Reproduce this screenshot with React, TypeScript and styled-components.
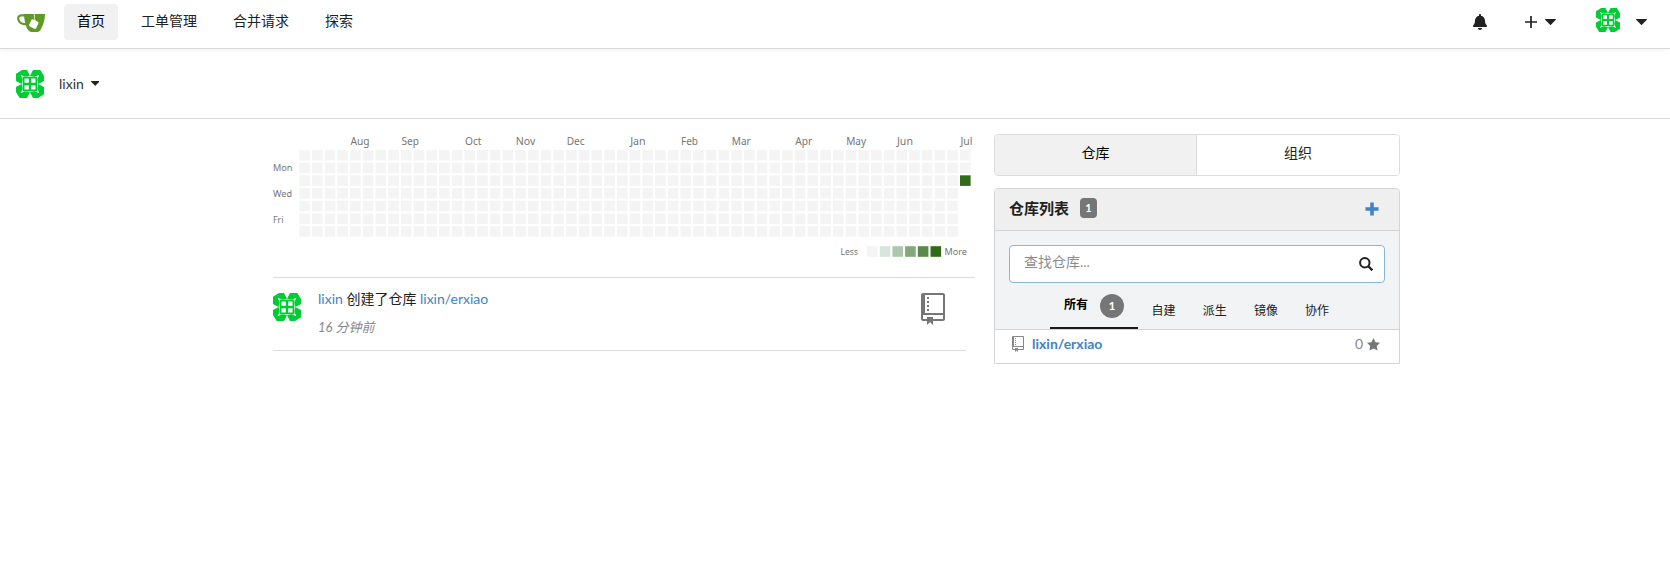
import React from "react";
import styled, { createGlobalStyle } from "styled-components";

const Global = createGlobalStyle`
  *, *::before, *::after { box-sizing: border-box; }
  body { margin: 0; background: #fff; color: #212121;
    font: 14px/20px Lato, "Noto Sans CJK SC", sans-serif; }
  svg { display: block; flex: none; }
`;

const Page = styled.div`min-height: 582px; background: #fff;`;

const Navbar = styled.nav`
  display: flex; align-items: flex-start; height: 49px; padding: 4px 23px 0 16px;
  border-bottom: 1px solid #d9d9d9; box-shadow: 0 2px 5px rgba(0, 0, 0, 0.04);
`;
const LogoLink = styled.a`display: block; width: 30px; margin: 9px 18px 0 0;`;
const NavItem = styled.a<{ $active?: boolean }>`
  height: 36px; padding: 7px 13px 9px; margin-right: 10px; border-radius: 4px; line-height: 20px;
  color: ${(p) => (p.$active ? "#000" : "#212121")};
  background: ${(p) => (p.$active ? "#f1f1f1" : "transparent")};
`;
const NavRight = styled.div`
  display: flex; align-items: center; height: 32px; margin-left: auto;
`;
const CreateMenu = styled.a`display: flex; align-items: center; gap: 8px; margin: 4px 40px 0 38px;`;
const Slot = styled.span<{ $top?: number; $left?: number }>`
  display: block; margin: ${(p) => p.$top ?? 0}px 0 0 ${(p) => p.$left ?? 0}px;
`;

const ContextBar = styled.div`
  display: flex; align-items: center; height: 70px; padding: 0 16px; border-bottom: 1px solid #d9d9d9;
`;
const ContextName = styled.span`margin: 0 7px 0 15px; color: #333;`;

const Main = styled.main`display: flex; padding: 15px 269px 0 273px;`;
const Feed = styled.section`width: 702px; margin-right: 19px;`;
const HeatmapBox = styled.div`height: 144px; border-bottom: 1px solid #dcdcdc;`;
const News = styled.article`
  display: flex; align-items: flex-start; width: 693px; height: 73px; padding: 15px 21px 0 0;
  border-bottom: 1px solid #dcdcdc;
`;
const NewsText = styled.div`flex: 1; margin-left: 17px;`;
const NewsTitle = styled.p`margin: -4px 0 8px; line-height: 20px; color: #212121;`;
const Time = styled.p`margin: 0; font-size: 13px; line-height: 20px; font-style: italic; color: #888;`;
const Link = styled.a<{ $bold?: boolean }>`
  color: #4183c4; font-weight: ${(p) => (p.$bold ? 700 : 400)};
`;

const Side = styled.aside`width: 406px;`;
const Switcher = styled.div`
  display: flex; height: 42px; margin-bottom: 12px; border: 1px solid #dcdcdc; border-radius: 4px; overflow: hidden;
`;
const SwitchItem = styled.a<{ $active?: boolean }>`
  flex: ${(p) => (p.$active ? "0 0 201px" : "1")}; padding-top: 8px; text-align: center; line-height: 20px;
  color: ${(p) => (p.$active ? "#000" : "#212121")};
  background: ${(p) => (p.$active ? "#f1f1f1" : "#fff")};
  & + & { border-left: 1px solid #dcdcdc; }
`;
const Panel = styled.div`
  border: 1px solid #d4d4d5; border-radius: 4px 4px 0 0; overflow: hidden;
`;
const PanelHeader = styled.header`
  display: flex; align-items: center; height: 42px; padding: 0 20px 4px 14px;
  background: #efefef; border-bottom: 1px solid #d4d4d5; font-weight: 700; font-size: 15px;
`;
const Count = styled.span`
  width: 17px; height: 20px; margin: 0 auto 0 11px; border-radius: 4px; background: #767676; color: #fff;
  font-size: 11px; line-height: 20px; text-align: center;
`;
const Filters = styled.div`
  height: 99px; padding: 14px 14px 0; background: #f1f3f5; border-bottom: 1px solid #d4d4d5;
`;
const Search = styled.label`
  display: flex; align-items: center; height: 38px; padding: 0 11px 4px 14px;
  border: 1px solid #85b7d9; border-radius: 4px; background: #fff; color: #8c8c8c;
`;
const SearchIcon = styled.span`margin: 3px 0 0 auto;`;
const Tabs = styled.div`display: flex; align-items: flex-start; height: 46px; margin: 0 0 0 41px;`;
const Tab = styled.a<{ $active?: boolean }>`
  display: flex; align-items: center; font-size: 12px; line-height: 20px; color: #212121;
  ${(p) => p.$active
    ? "width: 88px; height: 46px; padding: 2px 14px 0; gap: 12px; font-weight: 700; color: #000; border-bottom: 2px solid #1b1c1d;"
    : "height: 20px; margin: 18px 0 0 13.500px; padding-right: 13.700px;"}
`;
const TabCount = styled.span`
  width: 24px; height: 24px; border-radius: 50%; background: #767676; color: #fff;
  line-height: 24px; text-align: center;
`;
const TabLabel = styled.span`margin-top: -2px;`;
const RepoRow = styled.div`
  display: flex; align-items: center; gap: 8px; height: 33px; padding: 0 19px 5px 17px;
`;
const Stars = styled.span`display: flex; align-items: center; gap: 4px; margin-left: auto; color: #888;`;

const Identicon = ({ size }: { size: number }) => (
  <svg width={size} height={size} viewBox="0 0 84 84" fill="#0c3">
    {[0, 90, 180, 270].map((a) => (
      <path key={a} transform={`rotate(${a} 42 42)`} d="M0 11 18 0H33L42 17 28 20 14 14 20 28 17 42 0 33Z" />
    ))}
    <path d="M20 20h44v44H20z" />
    <path fill="#fff" d="M25.500 25.500h13v13h-13zM45.500 25.500h13v13h-13zM25.500 45.500h13v13h-13zM45.500 45.500h13v13h-13z" />
  </svg>
);

const Logo = () => (
  <svg width="30" height="20" viewBox="0 0 30 20">
    <path d="M10 2.400H5.400C2.700 2.400 2 4.300 2.300 6.300 2.800 9.400 5.500 11.100 10.500 11.300" fill="none" stroke="#609926" strokeWidth="2.200" />
    <path d="M8 1h21c0 5-1.300 10-4.200 15.500-.8 1.500-1.800 2.500-3.600 2.500h-5.700c-2 0-4.300-2.500-5.400-6C9 9.500 8 5 8 1Z" fill="#609926" />
    <rect x="13.900" y="7.200" width="7.800" height="7.800" rx="1.300" fill="#fff" transform="rotate(25 17.800 11.100)" />
    <path d="M18.400 1v4.500l1 2.500" stroke="#fff" strokeWidth=".8" fill="none" />
  </svg>
);

const Caret = ({ w }: { w: number }) => (
  <svg width={w} height={w / 2 + 0.5} viewBox="0 0 12 6.500"><path d="M.5 0h11c.5 0 .6.500.3.800L6.500 6.200q-.5.500-1 0L.2.800C-.1.500 0 0 .5 0Z" fill="#212121" /></svg>
);
const Bell = () => (
  <svg width="14" height="16" viewBox="0 0 448 512" fill="#212121">
    <path d="M224 512c35.320 0 63.970-28.650 63.970-64H160.030c0 35.350 28.650 64 63.970 64zm215.390-149.710c-19.320-20.760-55.470-51.990-55.470-154.290 0-77.700-54.480-139.900-127.940-155.160V32c0-17.670-14.320-32-31.980-32s-31.980 14.330-31.980 32v20.840C118.560 68.100 64.080 130.300 64.080 208c0 102.300-36.150 133.530-55.470 154.290-6 6.450-8.660 14.160-8.610 21.710.11 16.400 12.980 32 32.100 32h383.800c19.120 0 32-15.600 32.100-32 .05-7.550-2.610-15.270-8.610-21.710z" />
  </svg>
);
const RepoIcon = ({ h, color }: { h: number; color: string }) => (
  <svg width={h * 0.75} height={h} viewBox="0 0 12 16" fill={color}>
    <path d="M4 9H3V8h1v1zm0-3H3v1h1V6zm0-2H3v1h1V4zm0-2H3v1h1V2zm8-1v12c0 .55-.45 1-1 1H6v2l-1.500-1.500L3 16v-2H1c-.55 0-1-.45-1-1V1c0-.55.45-1 1-1h10c.55 0 1 .45 1 1zm-1 10H1v2h2v-1h3v1h5v-2zm0-10H2v9h9V1z" />
  </svg>
);

const PITCH = 12.706;
const months: [string, number, number][] = [
  ["Aug", 4, 19], ["Sep", 8, 17.5], ["Oct", 13, 16.5], ["Nov", 17, 19.5], ["Dec", 21, 18], ["Jan", 26, 15.5],
  ["Feb", 30, 17], ["Mar", 34, 19], ["Apr", 39, 17], ["May", 43, 20], ["Jun", 47, 16], ["Jul", 52, 12],
];
const legend = ["#f4f4f4", "#d7e5db", "#adc7ab", "#83a87b", "#598a4b", "#306b1a"];

const Heatmap = () => (
  <svg width="702" height="143" fontFamily='"Noto Sans", sans-serif' fill="#767676">
    {months.map(([m, c, w]) => (
      <text key={m} x={26.8 + c * PITCH} y="11" fontSize="10.600" textLength={w} lengthAdjust="spacingAndGlyphs">{m}</text>
    ))}
    {["Mon", "Wed", "Fri"].map((d, i) => (
      <text key={d} x="0" y={37 + i * 26} fontSize="9.500" textLength={[19.5, 19, 10.5][i]} lengthAdjust="spacingAndGlyphs">{d}</text>
    ))}
    {Array.from({ length: 367 }, (_, i) => (
      <rect key={i} x={26.3 + Math.floor(i / 7) * PITCH} y={15.9 + (i % 7) * PITCH} width="10.600" height="10.600"
        fill={i === 366 ? "#306b1a" : "#f4f4f4"} />
    ))}
    <text x="567.500" y="121" fontSize="9.500" textLength="17.500" lengthAdjust="spacingAndGlyphs">Less</text>
    {legend.map((c, i) => <rect key={c} x={594 + i * PITCH} y="112.200" width="10.600" height="10.600" fill={c} />)}
    <text x="671.500" y="121" fontSize="9.500" textLength="22.500" lengthAdjust="spacingAndGlyphs">More</text>
  </svg>
);

export default function App() {
  return (
    <Page>
      <Global />
      <Navbar>
        <LogoLink><Logo /></LogoLink>
        <NavItem $active>首页</NavItem>
        <NavItem>工单管理</NavItem>
        <NavItem>合并请求</NavItem>
        <NavItem>探索</NavItem>
        <NavRight>
          <Slot $top={4}><Bell /></Slot>
          <CreateMenu>
            <svg width="12" height="12"><path d="M6 0v12M0 6h12" stroke="#212121" strokeWidth="1.700" /></svg>
            <Caret w={11} />
          </CreateMenu>
          <Identicon size={24} />
          <Slot $top={3} $left={16}><Caret w={11} /></Slot>
        </NavRight>
      </Navbar>
      <ContextBar>
        <Identicon size={28} />
        <ContextName>lixin</ContextName>
        <Caret w={8.5} />
      </ContextBar>
      <Main>
        <Feed>
          <HeatmapBox><Heatmap /></HeatmapBox>
          <News>
            <Identicon size={28} />
            <NewsText>
              <NewsTitle><Link>lixin</Link> 创建了仓库 <Link>lixin/erxiao</Link></NewsTitle>
              <Time>16 分钟前</Time>
            </NewsText>
            <RepoIcon h={32} color="#767676" />
          </News>
        </Feed>
        <Side>
          <Switcher>
            <SwitchItem $active>仓库</SwitchItem>
            <SwitchItem>组织</SwitchItem>
          </Switcher>
          <Panel>
            <PanelHeader>
              仓库列表<Count>1</Count>
              <Slot $top={3}><svg width="14" height="14"><path d="M7 .5v13M.5 7h13" stroke="#4183c4" strokeWidth="3.600" /></svg></Slot>
            </PanelHeader>
            <Filters>
              <Search>
                查找仓库...
                <SearchIcon>
                  <svg width="14" height="14" viewBox="0 0 14 14" fill="none" stroke="#212121">
                    <circle cx="5.800" cy="5.800" r="4.700" strokeWidth="2" />
                    <path d="m9.300 9.300 4 4" strokeWidth="2.300" />
                  </svg>
                </SearchIcon>
              </Search>
              <Tabs>
                <Tab $active><TabLabel>所有</TabLabel><TabCount>1</TabCount></Tab>
                <Tab>自建</Tab>
                <Tab>派生</Tab>
                <Tab>镜像</Tab>
                <Tab>协作</Tab>
              </Tabs>
            </Filters>
            <RepoRow>
              <RepoIcon h={16} color="#888" />
              <Link $bold>lixin/erxiao</Link>
              <Stars>
                0
                <svg width="13" height="13" viewBox="0 0 24 24" fill="#767676"><path d="m12 0 3.700 7.700 8.300 1.200-6 5.900 1.400 8.300L12 19.200l-7.400 3.900L6 14.800 0 8.900l8.300-1.200Z" /></svg>
              </Stars>
            </RepoRow>
          </Panel>
        </Side>
      </Main>
    </Page>
  );
}
